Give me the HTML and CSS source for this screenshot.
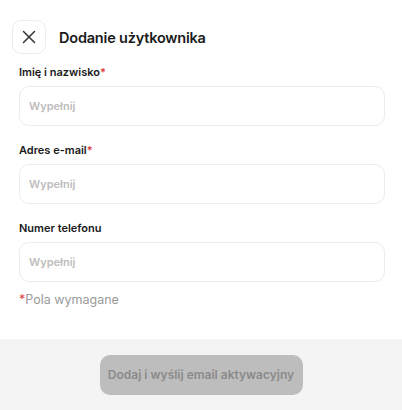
FILE: index.html
```html
<!DOCTYPE html>
<html lang="pl">
<head>
<meta charset="utf-8">
<link rel="stylesheet" href="styles.css">
</head>
<body>
<div class="page">
  <div class="content">
    <header class="header">
      <button class="close" aria-label="Zamknij">
        <svg width="14" height="14" viewBox="0 0 14 14"><path d="M1.5 1.5L12.5 12.5M12.5 1.5L1.5 12.5" stroke="#333" stroke-width="1.5" stroke-linecap="round" fill="none"/></svg>
      </button>
      <h1 class="title">Dodanie użytkownika</h1>
    </header>
    <div class="field">
      <label class="label">Imię i nazwisko<span class="req">*</span></label>
      <div class="input">Wypełnij</div>
    </div>
    <div class="field">
      <label class="label">Adres e-mail<span class="req">*</span></label>
      <div class="input">Wypełnij</div>
    </div>
    <div class="field">
      <label class="label">Numer telefonu</label>
      <div class="input">Wypełnij</div>
    </div>
    <p class="note"><span class="req">*</span>Pola wymagane</p>
  </div>
  <footer class="footer">
    <button class="submit">Dodaj i wyślij email aktywacyjny</button>
  </footer>
</div>
</body>
</html>
```
FILE: styles.css
```css
* { box-sizing: border-box; }
html, body { margin: 0; padding: 0; background: #fff; }
body { font-family: Inter, "Liberation Sans", sans-serif; color: #1a1a1a; }
.page { width: 402px; height: 410px; display: flex; flex-direction: column; }
.content { flex: 1; padding: 20px 17px 0 19px; }
.header { display: flex; align-items: center; gap: 13px; margin-left: -7px; height: 34px; }
.close { width: 34px; height: 34px; border: 1px solid #ececec; border-radius: 9px; background: #fff; display: flex; align-items: center; justify-content: center; padding: 0; }
.title { margin: 0; font-size: 14.5px; font-weight: 600; letter-spacing: -0.2px; color: #1a1a1a; }
.field { display: flex; flex-direction: column; }
.label { font-size: 11px; font-weight: 600; height: 14px; line-height: 14px; margin-bottom: 7px; color: #1a1a1a; }
.header + .field { margin-top: 11px; }
.field + .field { margin-top: 17px; }
.req { color: #e23b3b; }
.input { height: 40px; border: 1px solid #ececec; border-radius: 10px; padding: 0 9px; display: flex; align-items: center; font-size: 11px; font-weight: 600; color: #bdbdbd; }
.note { margin: 10px 0 0; font-size: 12.5px; color: #9a9a9a; }
.footer { height: 71px; background: #f4f4f4; display: flex; align-items: center; justify-content: center; }
.submit { width: 203px; height: 40px; border: none; border-radius: 10px; background: #bdbdbd; color: #8a8a8a; font-family: Inter, "Liberation Sans", sans-serif; font-size: 12px; font-weight: 600; padding: 0; }
```
